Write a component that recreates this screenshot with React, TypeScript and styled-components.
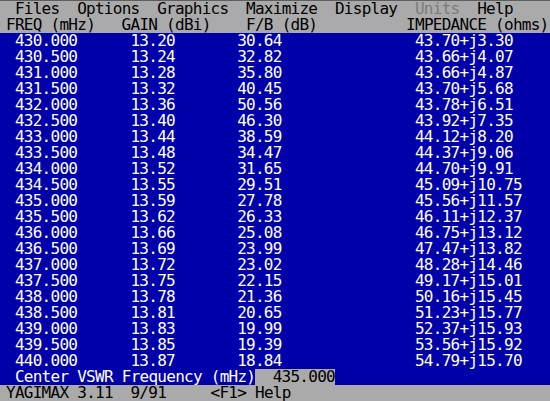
import * as React from 'react';
import styled, { createGlobalStyle } from 'styled-components';

const CELL = 8.9;

const GlobalStyle = createGlobalStyle`
  html, body {
    margin: 0;
    padding: 0;
    background: #aaaaaa;
  }
`;

const Screen = styled.div`
  width: 550px;
  height: 401px;
  overflow: hidden;
  background: #aaaaaa;
  border-top: 1px solid #5e5e5e;
  box-sizing: border-box;
  font-family: 'DejaVu Sans Mono', 'Liberation Mono', monospace;
  font-size: 16px;
  letter-spacing: ${CELL - 9.63}px;
`;

const Line = styled.div<{ $blue?: boolean }>`
  display: grid;
  grid-template-columns: repeat(62, ${CELL}px);
  height: 16px;
  line-height: 16px;
  padding-left: 6px;
  background: ${p => (p.$blue ? '#0000aa' : '#aaaaaa')};
  color: ${p => (p.$blue ? '#ffffff' : '#000000')};
  white-space: pre;
`;

const TextCell = styled.span<{ $col: number; $span: number; $dim?: boolean }>`
  grid-row: 1;
  grid-column: ${p => p.$col + 1} / span ${p => p.$span};
  color: ${p => (p.$dim ? '#7c7c7c' : 'inherit')};
`;

const InputBox = styled.span<{ $col: number; $span: number }>`
  grid-row: 1;
  grid-column: ${p => p.$col + 1} / span ${p => p.$span};
  background: #aaaaaa;
  color: #000000;
  text-align: right;
`;

const Table = styled.div`
  background: #0000aa;
`;

// a run of text that takes as many character cells as it has letters
const Cell: React.FC<{ col: number; text: string; dim?: boolean }> = ({ col, text, dim }) => (
  <TextCell $col={col} $span={text.length} $dim={dim}>
    {text}
  </TextCell>
);

const menu: [string, number, boolean?][] = [
  ['Files', 1],
  ['Options', 8],
  ['Graphics', 17],
  ['Maximize', 27],
  ['Display', 37],
  ['Units', 46, true],
  ['Help', 53],
];

const rows: [string, string, string, string][] = [
  ['430.000', '13.20', '30.64', '43.70+j3.30'],
  ['430.500', '13.24', '32.82', '43.66+j4.07'],
  ['431.000', '13.28', '35.80', '43.66+j4.87'],
  ['431.500', '13.32', '40.45', '43.70+j5.68'],
  ['432.000', '13.36', '50.56', '43.78+j6.51'],
  ['432.500', '13.40', '46.30', '43.92+j7.35'],
  ['433.000', '13.44', '38.59', '44.12+j8.20'],
  ['433.500', '13.48', '34.47', '44.37+j9.06'],
  ['434.000', '13.52', '31.65', '44.70+j9.91'],
  ['434.500', '13.55', '29.51', '45.09+j10.75'],
  ['435.000', '13.59', '27.78', '45.56+j11.57'],
  ['435.500', '13.62', '26.33', '46.11+j12.37'],
  ['436.000', '13.66', '25.08', '46.75+j13.12'],
  ['436.500', '13.69', '23.99', '47.47+j13.82'],
  ['437.000', '13.72', '23.02', '48.28+j14.46'],
  ['437.500', '13.75', '22.15', '49.17+j15.01'],
  ['438.000', '13.78', '21.36', '50.16+j15.45'],
  ['438.500', '13.81', '20.65', '51.23+j15.77'],
  ['439.000', '13.83', '19.99', '52.37+j15.93'],
  ['439.500', '13.85', '19.39', '53.56+j15.92'],
  ['440.000', '13.87', '18.84', '54.79+j15.70'],
];

const App: React.FC = () => (
  <>
    <GlobalStyle />
    <Screen>
      <Line>
        {menu.map(([label, col, dim]) => (
          <Cell key={label} col={col} text={label} dim={dim} />
        ))}
      </Line>
      <Line>
        <Cell col={0} text="FREQ (mHz)" />
        <Cell col={13} text="GAIN (dBi)" />
        <Cell col={27} text="F/B (dB)" />
        <Cell col={45} text="IMPEDANCE (ohms)" />
      </Line>
      <Table>
        {rows.map(([freq, gain, fb, imp]) => (
          <Line $blue key={freq}>
            <Cell col={1} text={freq} />
            <Cell col={14} text={gain} />
            <Cell col={26} text={fb} />
            <Cell col={46} text={imp} />
          </Line>
        ))}
        <Line $blue>
          <Cell col={1} text="Center VSWR Frequency (mHz)" />
          <InputBox $col={28} $span={9}>435.000</InputBox>
        </Line>
      </Table>
      <Line>
        <Cell col={0} text="YAGIMAX 3.11" />
        <Cell col={14} text="9/91" />
        <Cell col={23} text="<F1> Help" />
      </Line>
    </Screen>
  </>
);

export default App;
